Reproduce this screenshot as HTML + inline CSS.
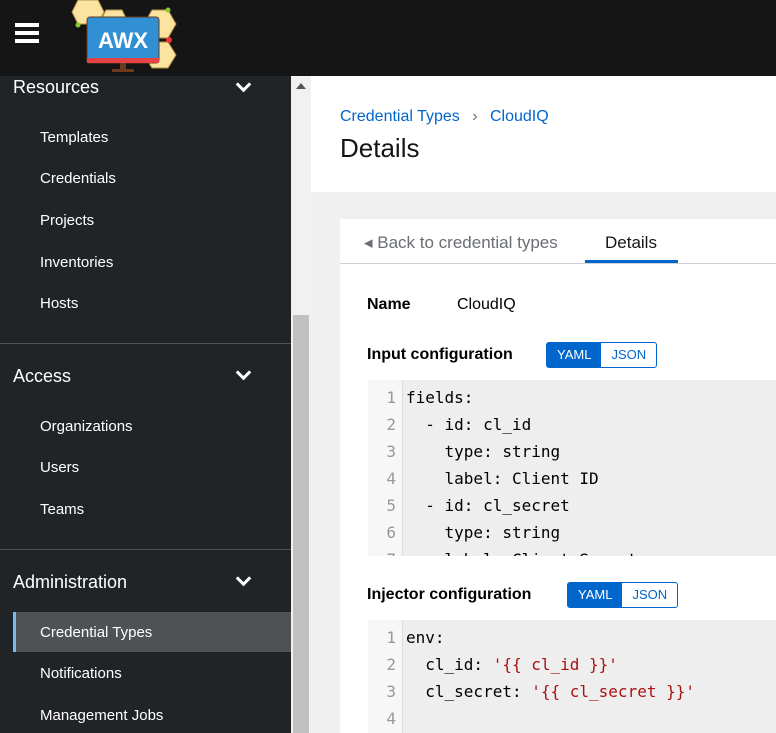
<!DOCTYPE html><html><head><style>
body{margin:0;width:776px;height:733px;overflow:hidden;font-family:"Liberation Sans",sans-serif;background:#f0f0f0;position:relative}
.hdr{position:absolute;left:0;top:0;width:776px;height:76px;background:#151515}
.side{position:absolute;left:0;top:76px;width:291px;height:657px;background:#212427;color:#fff}
.sb{position:absolute;left:291px;top:76px;width:20px;height:657px;background:#f1f1f1}
.thumb{position:absolute;left:293px;top:315px;width:16px;height:418px;background:#c1c1c1}
.grp{position:absolute;left:13px;font-size:18px}
.it{position:absolute;left:40px;font-size:15px}
.chev{position:absolute;left:238px;width:8px;height:8px;border-right:3px solid #fff;border-bottom:3px solid #fff;transform:rotate(45deg)}
.sep{position:absolute;left:0;width:291px;height:1px;background:#4f5255}
.top{position:absolute;left:311px;top:76px;width:465px;height:116px;background:#fff}
.card{position:absolute;left:340px;top:219px;width:436px;height:514px;background:#fff}
.code{position:absolute;left:28px;background:#eeeeee;font-family:"DejaVu Sans Mono","Liberation Mono",monospace;font-size:16px;overflow:hidden;width:408px}
.ln{position:absolute;left:0;top:0;width:34px;border-right:1px solid #ddd;height:100%;background:#f7f7f7}
.line{height:27px;line-height:27px;white-space:pre;position:relative}
.line b{font-weight:normal;display:inline-block;width:28px;text-align:right;color:#999;margin-right:10px}
.tog{position:absolute;display:flex;border:1px solid #06c;border-radius:3px;font-size:13px;height:24px;line-height:24px}
.tog span{padding:0 10px;color:#06c}
.tog span.on{background:#06c;color:#fff}
.s{color:#a11}
</style></head><body>
<div class="hdr">
<div style="position:absolute;left:15px;top:23px;width:24px;height:4px;background:#fff;box-shadow:0 8px 0 #fff,0 16px 0 #fff"></div>
<svg style="position:absolute;left:68px;top:0" width="115" height="74"><g fill="#fbe3a0" stroke="#b59243" stroke-width="1"><polygon points="10,0 30,0 36,12 30,24 10,24 4,12"/><polygon points="38,10 54,10 60,22 54,34 38,34 32,22"/><polygon points="84,10 100,10 108,24 100,38 84,38 76,24"/><polygon points="84,42 100,42 108,55 100,68 84,68 76,55"/></g>
<circle cx="10" cy="25" r="2.5" fill="#8c3"/><circle cx="100" cy="10" r="2.5" fill="#8c3"/><circle cx="101" cy="40" r="3" fill="#e33"/>
<rect x="19" y="17" width="72" height="46" rx="3" fill="#3190d4" stroke="#6b3a1d"/><rect x="19" y="58" width="72" height="5" fill="#e64444"/>
<rect x="52" y="63" width="6" height="6" fill="#6b3a1d"/><rect x="44" y="69" width="22" height="3" fill="#6b3a1d"/>
<text x="55" y="48" fill="#fff" font-family="Liberation Sans" font-weight="bold" font-size="22" text-anchor="middle">AWX</text></svg>
</div>
<div class="side">
<div class="grp" style="top:1px">Resources</div><div class="chev" style="top:3px"></div>
<div class="it" style="top:53px">Templates</div>
<div class="it" style="top:94px">Credentials</div>
<div class="it" style="top:136px">Projects</div>
<div class="it" style="top:178px">Inventories</div>
<div class="it" style="top:219px">Hosts</div>
<div class="sep" style="top:267px"></div>
<div class="grp" style="top:290px">Access</div><div class="chev" style="top:291px"></div>
<div class="it" style="top:342px">Organizations</div>
<div class="it" style="top:383px">Users</div>
<div class="it" style="top:425px">Teams</div>
<div class="sep" style="top:473px"></div>
<div class="grp" style="top:496px">Administration</div><div class="chev" style="top:497px"></div>
<div style="position:absolute;left:13px;top:536px;width:278px;height:40px;background:#4f5255;border-left:3px solid #73bcf7;box-sizing:border-box"></div>
<div class="it" style="top:548px">Credential Types</div>
<div class="it" style="top:589px">Notifications</div>
<div class="it" style="top:631px">Management Jobs</div>
</div>
<div class="sb"></div><div class="thumb"></div>
<div style="position:absolute;left:296px;top:83px;width:0;height:0;border:5px solid transparent;border-bottom:6px solid #555;border-top:0"></div>
<div class="top">
<div style="position:absolute;left:29px;top:32px;font-size:16px;color:#06c">Credential Types <span style="color:#6a6e73;margin:0 8px">›</span> CloudIQ</div>
<div style="position:absolute;left:29px;top:57px;font-size:26px;color:#151515">Details</div>
</div>
<div class="card">
<div style="position:absolute;left:0;top:44px;width:436px;height:1px;background:#d2d2d2"></div>
<div style="position:absolute;left:24px;top:14px;font-size:17px;color:#6a6e73">◂ Back to credential types</div>
<div style="position:absolute;left:265px;top:14px;font-size:17px;color:#151515">Details</div>
<div style="position:absolute;left:245px;top:41px;width:93px;height:3px;background:#06c"></div>
<div style="position:absolute;left:27px;top:77px;font-size:16px;font-weight:bold">Name</div>
<div style="position:absolute;left:117px;top:77px;font-size:16px">CloudIQ</div>
<div style="position:absolute;left:27px;top:127px;font-size:16px;font-weight:bold">Input configuration</div>
<div class="tog" style="left:206px;top:123px"><span class="on">YAML</span><span>JSON</span></div>
<div class="code" style="top:161px;height:176px"><div class="ln"></div>
<div class="line" style="margin-top:4px"><b>1</b>fields:</div>
<div class="line"><b>2</b>  - id: cl_id</div>
<div class="line"><b>3</b>    type: string</div>
<div class="line"><b>4</b>    label: Client ID</div>
<div class="line"><b>5</b>  - id: cl_secret</div>
<div class="line"><b>6</b>    type: string</div>
<div class="line"><b>7</b>    label: Client Secret</div></div>
<div style="position:absolute;left:27px;top:367px;font-size:16px;font-weight:bold">Injector configuration</div>
<div class="tog" style="left:227px;top:363px"><span class="on">YAML</span><span>JSON</span></div>
<div class="code" style="top:401px;height:113px"><div class="ln"></div>
<div class="line" style="margin-top:4px"><b>1</b>env:</div>
<div class="line"><b>2</b>  cl_id: <span class="s">'{{ cl_id }}'</span></div>
<div class="line"><b>3</b>  cl_secret: <span class="s">'{{ cl_secret }}'</span></div>
<div class="line"><b>4</b></div></div>
</div>
</body></html>
